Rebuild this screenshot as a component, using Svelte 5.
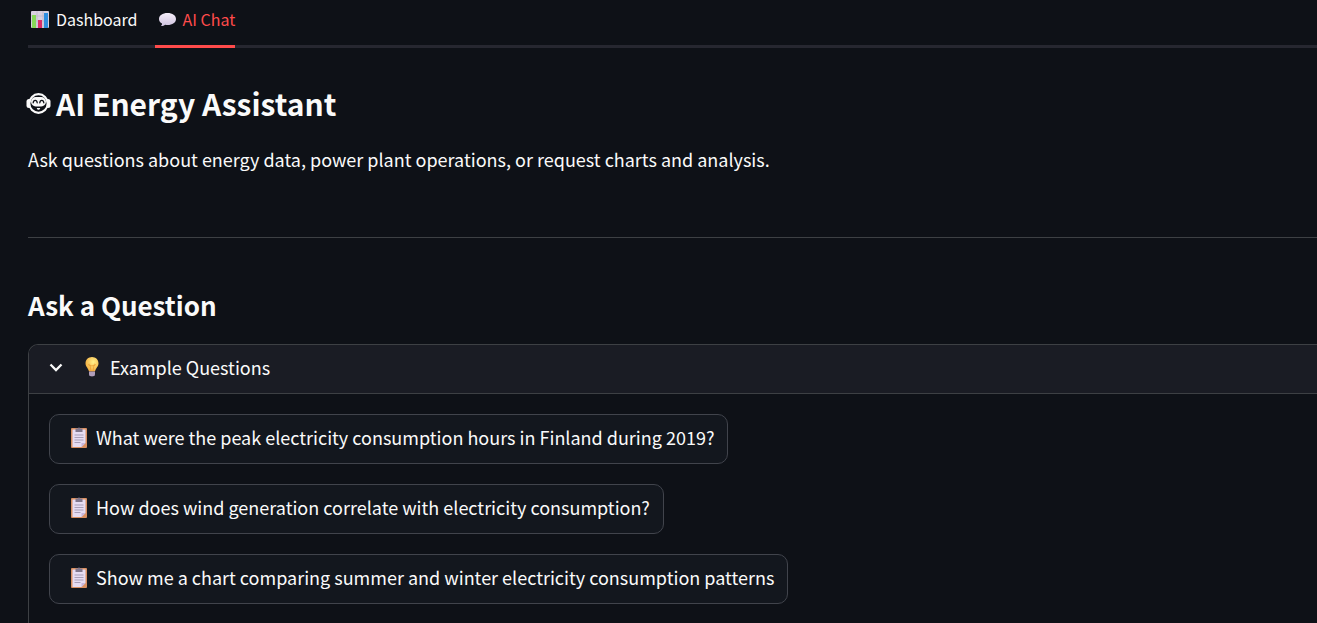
<script>
  const questions = [
    'What were the peak electricity consumption hours in Finland during 2019?',
    'How does wind generation correlate with electricity consumption?',
    'Show me a chart comparing summer and winter electricity consumption patterns',
  ];
  let active = $state('chat');
  let open = $state(true);
</script>

<main>
  <div class="tabs" role="tablist">
    <button class="tab" class:active={active === 'dashboard'} role="tab" aria-selected={active === 'dashboard'} onclick={() => (active = 'dashboard')}>
      <svg class="tab-icon" viewBox="0 0 24 20" aria-hidden="true">
        <rect x="3" y="2" width="18" height="17" rx="1" fill="#d8d0df" />
        <path d="M3 7h18M3 12h18M9 2v17M15 2v17" stroke="#b9b0c4" stroke-width="0.6" />
        <rect x="4" y="6" width="4" height="13" fill="#86d957" />
        <rect x="10" y="11" width="4" height="8" fill="#d92d68" />
        <rect x="16" y="4" width="4" height="15" fill="#2f8ee0" />
      </svg>
      <span>Dashboard</span>
    </button>
    <button class="tab" class:active={active === 'chat'} role="tab" aria-selected={active === 'chat'} onclick={() => (active = 'chat')}>
      <svg class="tab-icon" viewBox="0 0 24 20" aria-hidden="true">
        <defs>
          <linearGradient id="bubble" x1="0" y1="0" x2="0" y2="1">
            <stop offset="0" stop-color="#f5effa" />
            <stop offset="1" stop-color="#cfc2df" />
          </linearGradient>
        </defs>
        <path d="M12.500 4C7.500 4 4 6.500 4 10c0 2 1.200 3.600 3 4.600.2.900-.300 1.700-1 2.400 1.700.1 3.100-.4 4.200-1.200.7.100 1.500.2 2.300.2 5 0 8.500-2.500 8.500-6s-3.500-6-8.500-6z" fill="url(#bubble)" />
      </svg>
      <span>AI Chat</span>
    </button>
  </div>

  <h1>
    <svg class="robot" viewBox="0 0 28 28" aria-hidden="true">
      <rect x="-1.500" y="10" width="5" height="9" rx="2.500" fill="#fafafa" />
      <rect x="17.500" y="10" width="5" height="9" rx="2.500" fill="#fafafa" />
      <ellipse cx="10.500" cy="14.500" rx="9.200" ry="9.300" fill="#0e1117" stroke="#fafafa" stroke-width="2.200" />
      <rect x="3" y="8" width="15" height="9.500" rx="4.700" fill="#fafafa" />
      <path d="M5.200 13.800c.3-3.200 3.700-3.200 4 0M11.800 13.800c.3-3.200 3.700-3.200 4 0" fill="none" stroke="#0e1117" stroke-width="1.300" stroke-linecap="round" />
      <path d="M8.800 19h3.400c-.1 2.400-3.300 2.400-3.400 0z" fill="#fafafa" />
    </svg>
    <span>AI Energy Assistant</span>
  </h1>
  <p>Ask questions about energy data, power plant operations, or request charts and analysis.</p>

  <hr />

  <h2>Ask a Question</h2>

  <section class="expander">
    <button class="summary" aria-expanded={open} onclick={() => (open = !open)}>
      <svg class="chevron" class:closed={!open} viewBox="0 0 14 14" aria-hidden="true">
        <path d="M1.500 4.500 7 10l5.500-5.500" fill="none" stroke="#fafafa" stroke-width="2.300" />
      </svg>
      <svg class="emoji" viewBox="0 0 26 24" aria-hidden="true">
        <defs>
          <radialGradient id="glow" cx="0.600" cy="0.350" r="0.700">
            <stop offset="0" stop-color="#fff08a" />
            <stop offset="1" stop-color="#f3a83a" />
          </radialGradient>
        </defs>
        <path d="M13 2c-3.800 0-6.500 2.800-6.500 6.200 0 3.400 2.700 4.700 3.500 8.300h6c.8-3.600 3.500-4.900 3.500-8.300C19.500 4.800 16.800 2 13 2z" fill="url(#glow)" />
        <path d="M12 16.500 11 10c-.5-1.500-2-1-1.300.2.600.8 5.800.8 6.500 0 .7-1.200-.8-1.700-1.200-.2l-1 6.500" fill="none" stroke="#e99a32" stroke-width="0.700" />
        <path d="M10 16.500h6v3c0 1-1.500 2-3 2s-3-1-3-2z" fill="#9b86a8" />
        <path d="M10 18h6M10.300 20h5.400" stroke="#d5c8dc" stroke-width="0.700" />
      </svg>
      <span>Example Questions</span>
    </button>
    {#if open}
      <div class="body">
        {#each questions as question}
          <button class="question">
            <svg class="emoji" viewBox="0 0 26 24" aria-hidden="true">
              <rect x="6" y="3" width="16" height="20" rx="1" fill="#d98f60" />
              <path d="M7.500 4.500h13v13.500l-4 4h-9z" fill="#e6dcf2" />
              <path d="M20.500 18h-4v4z" fill="#c7b6da" />
              <path d="M10.500 3.500h2.200c.3-1.300 2.300-1.300 2.600 0h2.200v3.500h-7z" fill="#81778c" />
              <path d="M9.500 10h9M9.500 12.500h9M9.500 15h9M9.500 17.500h6" stroke="#a99fb8" stroke-width="1" />
            </svg>
            <span>{question}</span>
          </button>
        {/each}
      </div>
    {/if}
  </section>
</main>

<style>
  :global(body) {
    margin: 0;
    background: #0e1117;
  }
  main {
    box-sizing: border-box;
    min-height: 100vh;
    display: flex;
    flex-direction: column;
    padding-left: 28px;
    color: #fafafa;
    font-family: "Noto Sans CJK SC", "Noto Sans", sans-serif;
    font-size: 18px;
    line-height: 32px;
  }
  button {
    font: inherit;
    color: inherit;
    background: none;
    border: 0;
    margin: 0;
    padding: 0;
    cursor: pointer;
  }
  svg {
    display: block;
    flex: none;
  }
  .tabs {
    display: flex;
    gap: 17px;
    height: 48px;
    box-shadow: inset 0 -3px #262730;
  }
  .tab {
    display: flex;
    align-items: center;
    gap: 4px;
    padding-bottom: 7px;
    border-bottom: 3px solid transparent;
    font-size: 16px;
  }
  .tab.active {
    color: #ff4b4b;
    border-bottom-color: #ff4b4b;
  }
  .tab-icon {
    width: 24px;
    height: 20px;
  }
  h1,
  h2,
  p {
    margin: 0;
  }
  h1 {
    display: flex;
    align-items: center;
    margin-top: 35px;
    font-size: 30px;
    line-height: 40px;
    font-weight: 600;
  }
  .robot {
    width: 28px;
    height: 28px;
    overflow: visible;
  }
  p {
    margin-top: 20px;
  }
  hr {
    width: 100%;
    margin: 62px 0 47px;
    border: 0;
    border-top: 1px solid #3d4044;
  }
  h2 {
    font-size: 26px;
    line-height: 40px;
    font-weight: 600;
  }
  .expander {
    flex: 1;
    margin-top: 19px;
    border: 1px solid #3d4044;
    border-width: 1px 0 0 1px;
    border-radius: 10px 0 0 0;
    overflow: hidden;
  }
  .summary {
    display: flex;
    align-items: center;
    width: 100%;
    height: 49px;
    padding: 0 0 4px 20px;
    background: #1a1c24;
    border-bottom: 1px solid #3d4044;
  }
  .chevron {
    width: 14px;
    height: 14px;
    margin-right: 16px;
  }
  .chevron.closed {
    transform: rotate(-90deg);
  }
  .emoji {
    width: 26px;
    height: 24px;
    margin-right: 5px;
  }
  .body {
    display: flex;
    flex-direction: column;
    align-items: flex-start;
    gap: 20px;
    padding: 20px;
  }
  .question {
    display: flex;
    align-items: center;
    min-height: 50px;
    padding: 0 13px 4px 15px;
    background: #13171e;
    border: 1px solid #41444c;
    border-radius: 10px;
    text-align: left;
  }
</style>
